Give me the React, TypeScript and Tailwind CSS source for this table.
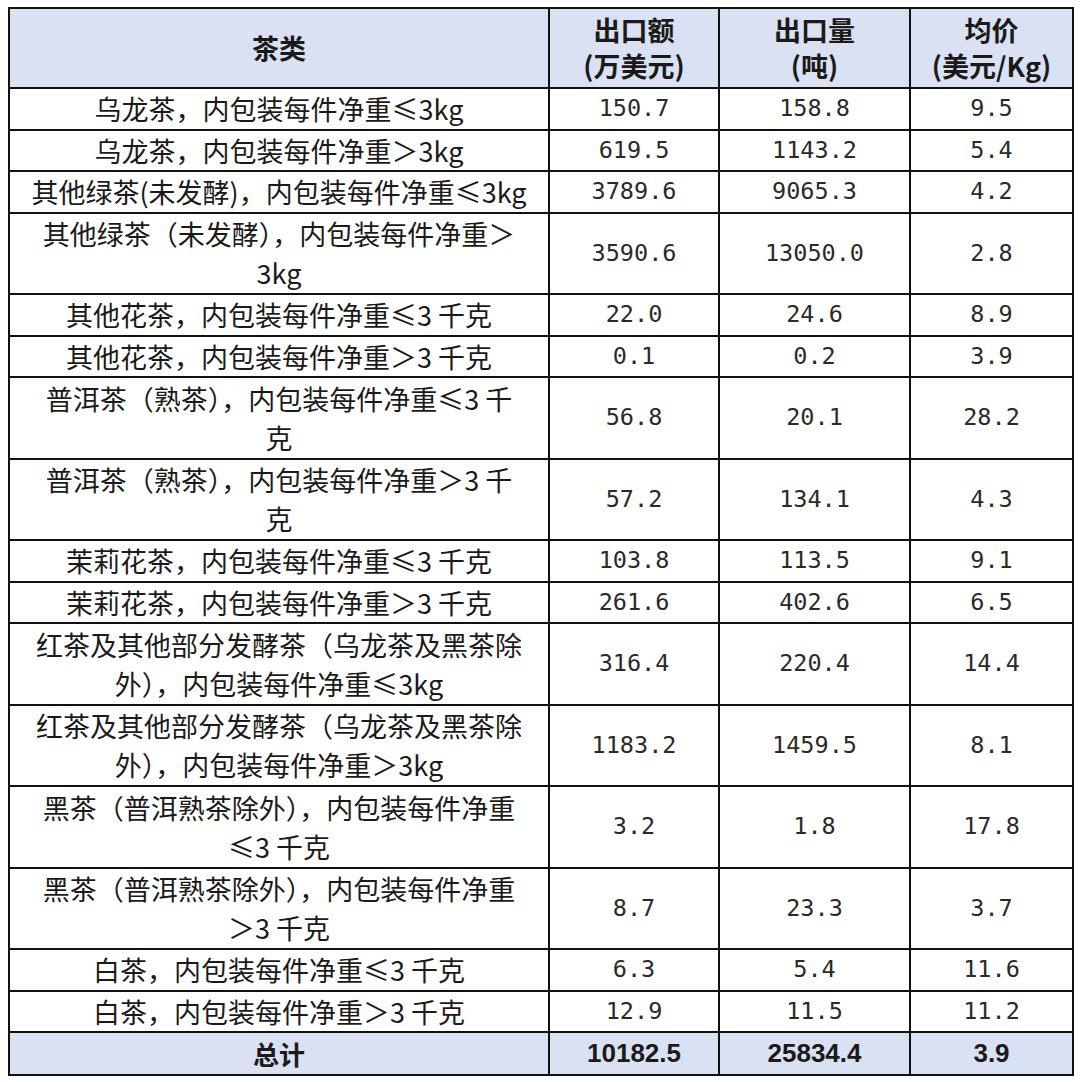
import React from 'react'

type Row = { name: string[]; v: [string, string, string] }

const rows: Row[] = [
  { name: ['乌龙茶，内包装每件净重≤3kg'], v: ['150.7', '158.8', '9.5'] },
  { name: ['乌龙茶，内包装每件净重＞3kg'], v: ['619.5', '1143.2', '5.4'] },
  { name: ['其他绿茶(未发酵)，内包装每件净重≤3kg'], v: ['3789.6', '9065.3', '4.2'] },
  { name: ['其他绿茶（未发酵），内包装每件净重＞', '3kg'], v: ['3590.6', '13050.0', '2.8'] },
  { name: ['其他花茶，内包装每件净重≤3 千克'], v: ['22.0', '24.6', '8.9'] },
  { name: ['其他花茶，内包装每件净重＞3 千克'], v: ['0.1', '0.2', '3.9'] },
  { name: ['普洱茶（熟茶），内包装每件净重≤3 千', '克'], v: ['56.8', '20.1', '28.2'] },
  { name: ['普洱茶（熟茶），内包装每件净重＞3 千', '克'], v: ['57.2', '134.1', '4.3'] },
  { name: ['茉莉花茶，内包装每件净重≤3 千克'], v: ['103.8', '113.5', '9.1'] },
  { name: ['茉莉花茶，内包装每件净重＞3 千克'], v: ['261.6', '402.6', '6.5'] },
  { name: ['红茶及其他部分发酵茶（乌龙茶及黑茶除', '外），内包装每件净重≤3kg'], v: ['316.4', '220.4', '14.4'] },
  { name: ['红茶及其他部分发酵茶（乌龙茶及黑茶除', '外），内包装每件净重＞3kg'], v: ['1183.2', '1459.5', '8.1'] },
  { name: ['黑茶（普洱熟茶除外），内包装每件净重', '≤3 千克'], v: ['3.2', '1.8', '17.8'] },
  { name: ['黑茶（普洱熟茶除外），内包装每件净重', '＞3 千克'], v: ['8.7', '23.3', '3.7'] },
  { name: ['白茶，内包装每件净重≤3 千克'], v: ['6.3', '5.4', '11.6'] },
  { name: ['白茶，内包装每件净重＞3 千克'], v: ['12.9', '11.5', '11.2'] },
]

const cjk = "font-['Noto_Sans_CJK_SC',sans-serif]"
const mono = "font-['DejaVu_Sans_Mono','Noto_Sans_CJK_SC',monospace]"
const cell = 'border-2 border-[#111] text-center align-middle p-0'

export default function App() {
  return (
    <div className="min-h-screen bg-white pl-[8px] pt-[7px]">
      <table className="table-fixed border-collapse w-[1064px] text-[#1a1a1a]">
        <colgroup>
          <col className="w-[540px]" />
          <col className="w-[170px]" />
          <col className="w-[191px]" />
          <col className="w-[163px]" />
        </colgroup>
        <thead>
          <tr className={`h-[80px] bg-[#d9e1f2] font-bold text-[27px] leading-[36px] ${cjk}`}>
            <th className={cell}>茶类</th>
            <th className={cell}>
              出口额
              <br />
              (万美元)
            </th>
            <th className={cell}>
              出口量
              <br />
              (吨)
            </th>
            <th className={cell}>
              均价
              <br />
              (美元/Kg)
            </th>
          </tr>
        </thead>
        <tbody>
          {rows.map((r, i) => (
            <tr key={i} className={r.name.length > 1 ? 'h-[81.5px]' : 'h-[41.5px]'}>
              <td className={`${cell} ${cjk} text-[27px] leading-[39px]`}>
                {r.name.map((line, j) => (
                  <span key={j} className="block whitespace-nowrap">
                    {line}
                  </span>
                ))}
              </td>
              {r.v.map((n, j) => (
                <td key={j} className={`${cell} ${mono} text-[23.5px] text-[#2a2a2a]`}>
                  {n}
                </td>
              ))}
            </tr>
          ))}
          <tr className="h-[43px] bg-[#d9e1f2] font-bold">
            <td className={`${cell} ${cjk} text-[26px]`}>总计</td>
            <td className={`${cell} font-['Liberation_Sans',sans-serif] text-[26px]`}>10182.5</td>
            <td className={`${cell} font-['Liberation_Sans',sans-serif] text-[26px]`}>25834.4</td>
            <td className={`${cell} font-['Liberation_Sans',sans-serif] text-[26px]`}>3.9</td>
          </tr>
        </tbody>
      </table>
    </div>
  )
}
